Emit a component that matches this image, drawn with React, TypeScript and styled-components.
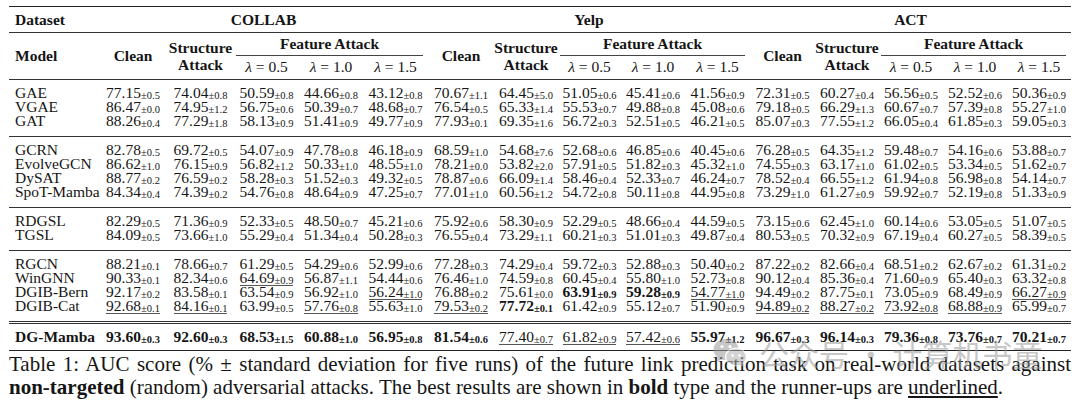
import React from "react";
import styled, { createGlobalStyle } from "styled-components";

const GlobalStyle = createGlobalStyle`
  html, body {
    margin: 0;
    padding: 0;
    background: #fff;
  }
  body {
    font-family: "Liberation Serif", "Times New Roman", serif;
    color: #151515;
  }
`;

type Row = [string, string];

// values per row: COLLAB x5, Yelp x5, ACT x5 ("*" = bold, "_" = underlined)
const groups: Row[][] = [
    [
        ["GAE", "77.15/0.5 74.04/0.8 50.59/0.8 44.66/0.8 43.12/0.8 70.67/1.1 64.45/5.0 51.05/0.6 45.41/0.6 41.56/0.9 72.31/0.5 60.27/0.4 56.56/0.5 52.52/0.6 50.36/0.9"],
        ["VGAE", "86.47/0.0 74.95/1.2 56.75/0.6 50.39/0.7 48.68/0.7 76.54/0.5 65.33/1.4 55.53/0.7 49.88/0.8 45.08/0.6 79.18/0.5 66.29/1.3 60.67/0.7 57.39/0.8 55.27/1.0"],
        ["GAT", "88.26/0.4 77.29/1.8 58.13/0.9 51.41/0.9 49.77/0.9 77.93/0.1 69.35/1.6 56.72/0.3 52.51/0.5 46.21/0.5 85.07/0.3 77.55/1.2 66.05/0.4 61.85/0.3 59.05/0.3"],
    ],
    [
        ["GCRN", "82.78/0.5 69.72/0.5 54.07/0.9 47.78/0.8 46.18/0.9 68.59/1.0 54.68/7.6 52.68/0.6 46.85/0.6 40.45/0.6 76.28/0.5 64.35/1.2 59.48/0.7 54.16/0.6 53.88/0.7"],
        ["EvolveGCN", "86.62/1.0 76.15/0.9 56.82/1.2 50.33/1.0 48.55/1.0 78.21/0.0 53.82/2.0 57.91/0.5 51.82/0.3 45.32/1.0 74.55/0.3 63.17/1.0 61.02/0.5 53.34/0.5 51.62/0.7"],
        ["DySAT", "88.77/0.2 76.59/0.2 58.28/0.3 51.52/0.3 49.32/0.5 78.87/0.6 66.09/1.4 58.46/0.4 52.33/0.7 46.24/0.7 78.52/0.4 66.55/1.2 61.94/0.8 56.98/0.8 54.14/0.7"],
        ["SpoT-Mamba", "84.34/0.4 74.39/0.2 54.76/0.8 48.64/0.9 47.25/0.7 77.01/1.0 60.56/1.2 54.72/0.8 50.11/0.8 44.95/0.8 73.29/1.0 61.27/0.9 59.92/0.7 52.19/0.8 51.33/0.9"],
    ],
    [
        ["RDGSL", "82.29/0.5 71.36/0.9 52.33/0.5 48.50/0.7 45.21/0.6 75.92/0.6 58.30/0.9 52.29/0.5 48.66/0.4 44.59/0.5 73.15/0.6 62.45/1.0 60.14/0.6 53.05/0.5 51.07/0.5"],
        ["TGSL", "84.09/0.5 73.66/1.0 55.29/0.4 51.34/0.4 50.28/0.3 76.55/0.4 73.29/1.1 60.21/0.3 51.01/0.3 49.87/0.4 80.53/0.5 70.32/0.9 67.19/0.4 60.27/0.5 58.39/0.5"],
    ],
    [
        ["RGCN", "88.21/0.1 78.66/0.7 61.29/0.5 54.29/0.6 52.99/0.6 77.28/0.3 74.29/0.4 59.72/0.3 52.88/0.3 50.40/0.2 87.22/0.2 82.66/0.4 68.51/0.2 62.67/0.2 61.31/0.2"],
        ["WinGNN", "90.33/0.1 82.34/0.6 _64.69/0.9 56.87/1.1 54.44/0.6 76.46/1.0 74.59/0.8 60.45/0.4 55.80/1.0 52.73/0.8 90.12/0.4 85.36/0.4 71.60/0.9 65.40/0.3 63.32/0.8"],
        ["DGIB-Bern", "92.17/0.2 83.58/0.1 63.54/0.9 56.92/1.0 _56.24/1.0 76.88/0.2 75.61/0.0 *63.91/0.9 *59.28/0.9 _54.77/1.0 94.49/0.2 87.75/0.1 73.05/0.9 68.49/0.9 _66.27/0.9"],
        ["DGIB-Cat", "_92.68/0.1 _84.16/0.1 63.99/0.5 _57.76/0.8 55.63/1.0 _79.53/0.2 *77.72/0.1 61.42/0.9 55.12/0.7 51.90/0.9 _94.89/0.2 _88.27/0.2 _73.92/0.8 _68.88/0.9 65.99/0.7"],
    ],
    [
        ["*DG-Mamba", "*93.60/0.3 *92.60/0.3 *68.53/1.5 *60.88/1.0 *56.95/0.8 *81.54/0.6 _77.40/0.7 _61.82/0.9 _57.42/0.6 *55.97/1.2 *96.67/0.3 *96.14/0.3 *79.36/0.8 *73.76/0.7 *70.21/0.7"],
    ],
];

const datasets = ["COLLAB", "Yelp", "ACT"];
const widths = [90, 68, 67, 65, 64, 65, 66, 64, 63, 64, 65, 65, 64, 64, 64, 64];
const lambdas = ["0.5", "1.0", "1.5"];

function App() {
    return (
        <Page>
            <GlobalStyle />
            <Table>
                <colgroup>
                    {widths.map((w, i) => (
                        <Col key={i} $w={w} />
                    ))}
                </colgroup>
                <thead>
                    <DatasetRow>
                        <HeadCell $left>Dataset</HeadCell>
                        {datasets.map((d) => (
                            <HeadCell key={d} colSpan={5}>
                                {d}
                            </HeadCell>
                        ))}
                    </DatasetRow>
                    <AttackRow>
                        <HeadCell $left rowSpan={2}>
                            Model
                        </HeadCell>
                        {datasets.map((d) => (
                            <React.Fragment key={d}>
                                <HeadCell rowSpan={2}>Clean</HeadCell>
                                <HeadCell rowSpan={2}>
                                    <TwoLine>
                                        Structure
                                        <br />
                                        Attack
                                    </TwoLine>
                                </HeadCell>
                                <HeadCell colSpan={3}>
                                    <CmidRule>Feature Attack</CmidRule>
                                </HeadCell>
                            </React.Fragment>
                        ))}
                    </AttackRow>
                    <LambdaRow>
                        {datasets.map((d) =>
                            lambdas.map((l) => (
                                <LambdaCell key={d + l}>
                                    <i>λ</i> = {l}
                                </LambdaCell>
                            ))
                        )}
                    </LambdaRow>
                </thead>
                {groups.map((rows, gi) => {
                    const final = gi === groups.length - 1;
                    return (
                        <tbody key={gi}>
                            {rows.map(([model, vals], ri) => (
                                <DataRow
                                    key={model}
                                    $rule={ri === 0 ? (final ? "double" : gi === 0 ? "none" : "mid") : "none"}
                                    $padTop={ri === 0 ? 6 : 0}
                                    $padBottom={ri === rows.length - 1 ? (final ? 6 : 8) : 0}
                                >
                                    <ModelCell $bold={model.startsWith("*")}>
                                        {model.replace("*", "")}
                                    </ModelCell>
                                    {vals.split(" ").map((v, vi) => {
                                        const bold = v.startsWith("*");
                                        const under = v.startsWith("_");
                                        const [main, std] = v.replace(/^[*_]/, "").split("/");
                                        return (
                                            <ValueCell key={vi}>
                                                <Num $bold={bold} $under={under}>
                                                    {main}
                                                    <Sub>±{std}</Sub>
                                                </Num>
                                            </ValueCell>
                                        );
                                    })}
                                </DataRow>
                            ))}
                        </tbody>
                    );
                })}
            </Table>
            <Caption>
                <CaptionLine $justify>
                    Table 1: AUC score (% ± standard deviation for five runs) of the future link prediction task on real-world datasets against
                </CaptionLine>
                <CaptionLine>
                    <b>non-targeted</b> (random) adversarial attacks. The best results are shown in <b>bold</b> type and the runner-ups are{" "}
                    <u>underlined</u>.
                </CaptionLine>
            </Caption>
            <Watermark>
                <svg width="34" height="30" viewBox="0 0 34 30">
                    <ellipse cx="13" cy="11.5" rx="12.5" ry="10.5" fill="#9a9a9a" />
                    <path d="M5 18 L3.5 24 L10 20 Z" fill="#9a9a9a" />
                    <ellipse cx="23" cy="19" rx="10.5" ry="8.8" fill="#b0b0b0" stroke="#fff" strokeWidth="1.2" />
                    <path d="M29 25 L31.5 29 L25 26.5 Z" fill="#b0b0b0" />
                    <circle cx="9" cy="8.5" r="1.6" fill="#fff" />
                    <circle cx="17" cy="8.5" r="1.6" fill="#fff" />
                    <circle cx="19.5" cy="17.5" r="1.3" fill="#fff" />
                    <circle cx="26.5" cy="17.5" r="1.3" fill="#fff" />
                </svg>
                <span>公众号 · 计算机书童</span>
            </Watermark>
        </Page>
    );
}

const Page = styled.div`
    position: relative;
    width: 1080px;
    height: 405px;
    padding: 6px 9px 0 9px;
    box-sizing: border-box;
    overflow: hidden;
`;

const Table = styled.table`
    border-collapse: collapse;
    table-layout: fixed;
    width: 1062px;
    font-size: 15.5px;
    border-top: 1.5px solid #222;
    border-bottom: 1.5px solid #222;
`;

const Col = styled.col<{ $w: number }>`
    width: ${(p) => p.$w}px;
`;

const HeadCell = styled.th<{ $left?: boolean }>`
    padding: 0 0 0 ${(p) => (p.$left ? "6px" : "0")};
    font-weight: 700;
    text-align: ${(p) => (p.$left ? "left" : "center")};
    vertical-align: middle;
    white-space: nowrap;
    line-height: 17px;
`;

const DatasetRow = styled.tr`
    height: 26px;
    border-bottom: 1px solid #333;
`;

const AttackRow = styled.tr`
    height: 23px;
`;

const LambdaRow = styled.tr`
    height: 23px;
    border-bottom: 1px solid #333;
`;

const TwoLine = styled.div`
    line-height: 17px;
    padding-top: 1px;
`;

const CmidRule = styled.div`
    margin: 0 5px 0 2px;
    height: 22px;
    line-height: 21px;
    border-bottom: 1px solid #444;
`;

const LambdaCell = styled.td`
    padding: 0;
    text-align: center;
    white-space: nowrap;
    font-size: 15.5px;
    vertical-align: middle;
    > i {
        font-style: italic;
    }
`;

const DataRow = styled.tr<{ $rule: "none" | "mid" | "double"; $padTop: number; $padBottom: number }>`
    border-top: ${(p) =>
        p.$rule === "mid" ? "1px solid #333" : p.$rule === "double" ? "3px double #333" : "none"};
    > td {
        padding-top: ${(p) => p.$padTop}px;
        padding-bottom: ${(p) => p.$padBottom}px;
        line-height: 14px;
        vertical-align: top;
        white-space: nowrap;
    }
`;

const ModelCell = styled.td<{ $bold: boolean }>`
    padding-left: 6px !important;
    text-align: left;
    font-weight: ${(p) => (p.$bold ? 700 : 400)};
`;

const ValueCell = styled.td`
    text-align: center;
    padding-left: 0;
    padding-right: 0;
`;

const Num = styled.span<{ $bold: boolean; $under: boolean }>`
    font-weight: ${(p) => (p.$bold ? 700 : 400)};
    box-shadow: ${(p) => (p.$under ? "inset 0 -1px 0 #555" : "none")};
`;

const Sub = styled.span`
    font-size: 10.5px;
    line-height: 0;
    vertical-align: -1px;
`;

const Caption = styled.div`
    margin-top: 2px;
    width: 1062px;
    font-size: 21px;
    line-height: 23px;
    color: #151515;
`;

const CaptionLine = styled.div<{ $justify?: boolean }>`
    white-space: nowrap;
    text-align: ${(p) => (p.$justify ? "justify" : "left")};
    text-align-last: ${(p) => (p.$justify ? "justify" : "auto")};
    ${(p) => (p.$justify ? "white-space: normal;" : "")}
`;

const Watermark = styled.div`
    position: absolute;
    left: 713px;
    top: 336px;
    display: flex;
    align-items: center;
    gap: 12px;
    opacity: 0.55;
    pointer-events: none;
    > span {
        font-family: "Noto Sans CJK SC", sans-serif;
        font-size: 30px;
        line-height: 34px;
        color: #9a9a9a;
        letter-spacing: 0px;
        white-space: pre;
    }
`;

export default App;
